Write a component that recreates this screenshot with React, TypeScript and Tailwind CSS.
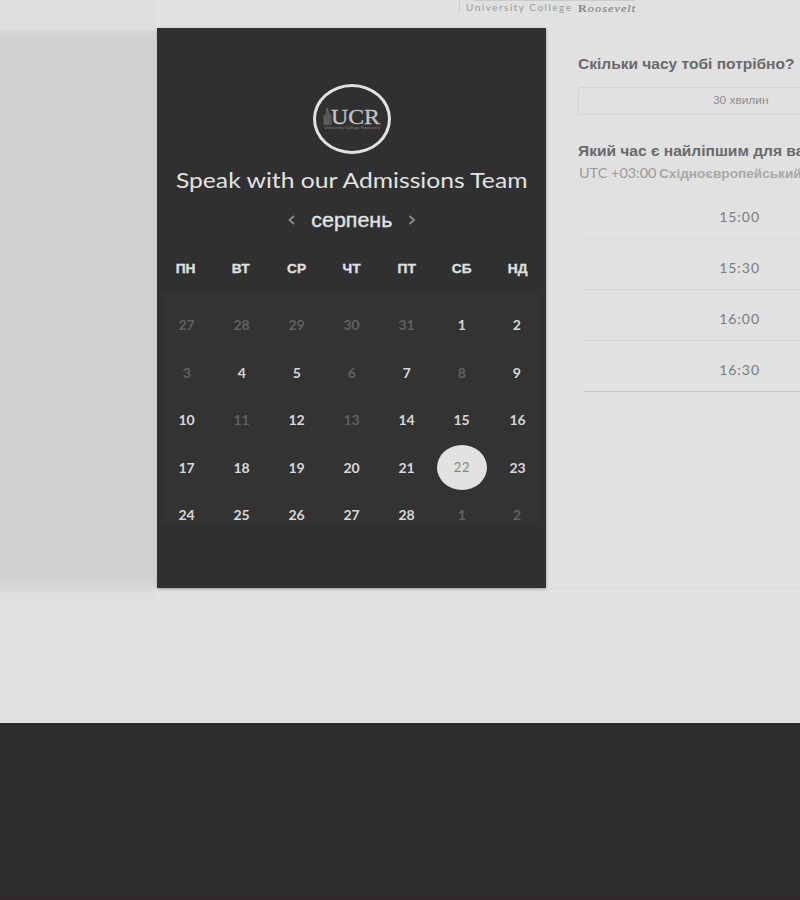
import React from "react";

const weekdays = ["ПН", "ВТ", "СР", "ЧТ", "ПТ", "СБ", "НД"];

const weeks = [
  [27, 28, 29, 30, 31, 1, 2],
  [3, 4, 5, 6, 7, 8, 9],
  [10, 11, 12, 13, 14, 15, 16],
  [17, 18, 19, 20, 21, 22, 23],
  [24, 25, 26, 27, 28, 1, 2],
];

const unavailable = new Set(["0-0", "0-1", "0-2", "0-3", "0-4", "1-0", "1-3", "1-5", "2-1", "2-3", "4-5", "4-6"]);

const times = [
  { label: "15:00", line: "border-[#dadada]" },
  { label: "15:30", line: "border-[#d5d5d5]" },
  { label: "16:00", line: "border-[#d1d1d1]" },
  { label: "16:30", line: "border-[#c6c6c6]" },
];

function Logo() {
  return (
    <div className="mx-auto flex h-[70px] w-[78px] shrink-0 items-center justify-center rounded-[50%] border-[3px] border-[#e2e2e2]">
      <svg width="58" height="30" viewBox="0 0 58 30">
        <path d="M1 21V12L3 10L4 4L6 9L8 12V21M3 13V21M5 9V21" fill="#505050" stroke="#707070" strokeWidth=".7" />
        <text x="8" y="19.5" textLength="49" lengthAdjust="spacingAndGlyphs" fontFamily="Liberation Serif, serif" fontSize="21" fill="#c4c4c4" stroke="#c4c4c4" strokeWidth=".3">UCR</text>
        <text x="1" y="24.5" textLength="56" lengthAdjust="spacingAndGlyphs" fontFamily="Lato, sans-serif" fontSize="4.2" fill="#858585">University College Roosevelt</text>
      </svg>
    </div>
  );
}

function Day({ value, id }: { value: number; id: string }) {
  if (id === "3-5") {
    return (
      <div className="flex h-[47.4px] items-center justify-center">
        <span className="-mt-[2px] flex h-[45px] w-[50px] shrink-0 items-center justify-center rounded-[50%] bg-[#e2e2e2] text-[13px] tracking-[0.8px] text-[#858585]">{value}</span>
      </div>
    );
  }
  return (
    <div className={`flex h-[47.4px] items-center justify-center font-bold ${unavailable.has(id) ? "text-[#606060]" : "text-[#d8d8d8]"}`}>
      <span className="scale-x-[1.08]">{value}</span>
    </div>
  );
}

export default function App() {
  return (
    <div className="flex h-[900px] w-[800px] flex-col overflow-hidden bg-[#e1e1e1] font-['Lato','Liberation_Sans',sans-serif]">
      <header className="flex h-7 shrink-0">
        <div className="h-7 w-[155px] bg-[#dfdfdf]" />
        <div className="ml-[304px] h-[13px] w-[178px] border-l border-[#cfcfcf] pl-[6px]">
          <div className="ml-[8px] h-px w-[161px] bg-[#cbcbcb]" />
          <div className="flex h-[14px] items-center whitespace-nowrap text-[9px] leading-[14px] text-[#999]">
            <span className="w-[112px]"><span className="inline-block origin-left scale-x-[1.11] tracking-[1.35px]">University College</span></span>
            <span className="origin-left scale-x-[1.1] font-['Liberation_Serif',serif] text-[11px] tracking-[1px] text-[#858585]"><b>R</b><i className="[-webkit-text-stroke:0.2px_#858585]">oosevelt</i></span>
          </div>
        </div>
      </header>

      <main className="flex h-[560px] shrink-0">
        <div className="h-[572px] w-[155px] shrink-0 bg-[linear-gradient(to_bottom,#dfdfdf_0px,#d5d5d5_5px,#d0d0d0_13px,#d0d0d0_548px,#d4d4d4_556px,#dfdfdf_567px)]" />
        <section className="ml-[2px] flex h-[559.5px] w-[389px] shrink-0 flex-col bg-[#303030] pt-[56px] shadow-[0_1px_3px_#999]">
          <Logo />
          <h1 className="mt-[7px] flex h-9 items-center justify-center whitespace-nowrap text-[22px] text-[#e2e2e2]">
            <span className="scale-x-[1.122]">Speak with our Admissions Team</span>
          </h1>
          <div className="mt-[2px] flex h-[42px] items-center justify-center gap-[15px] text-[#e2e2e2]">
            <svg width="8" height="10" viewBox="0 0 8 10" fill="none" stroke="#8c8c8c" strokeWidth="1.8"><path d="M6 1L1.5 5L6 9" /></svg>
            <span className="w-[82px] whitespace-nowrap text-center font-['Liberation_Sans',sans-serif] text-[20px] [-webkit-text-stroke:0.35px_#e2e2e2]"><span className="inline-block scale-x-[1.07]">серпень</span></span>
            <svg width="8" height="10" viewBox="0 0 8 10" fill="none" stroke="#8c8c8c" strokeWidth="1.8"><path d="M1.5 1L6 5L1.5 9" /></svg>
          </div>
          <div className="mt-[15px] ml-px grid h-[27px] grid-cols-[repeat(7,55.3px)] items-center text-center font-['Liberation_Sans',sans-serif] text-[12.5px] font-bold text-[#e0e0e0] [-webkit-text-stroke:0.3px_#e0e0e0]">
            {weekdays.map((d) => <span key={d} className="scale-x-[1.1]">{d}</span>)}
          </div>
          <div className="mx-[6px] mt-[10px] h-[231px] bg-[#333333] pt-[9.4px]">
            <div className="-ml-[4px] grid grid-cols-[repeat(7,55.1px)] text-[13px]">
              {weeks.flatMap((week, r) => week.map((value, c) => <Day key={`${r}-${c}`} id={`${r}-${c}`} value={value} />))}
            </div>
          </div>
        </section>

        <section className="h-[561px] w-[254px] shrink-0 overflow-hidden border-b border-[#dadada] pl-8 pt-[24px]">
          <h2 className="h-6 whitespace-nowrap font-['Liberation_Sans',sans-serif] text-[15px] font-bold leading-6 text-[#696969]"><span className="inline-block origin-left scale-x-[1.035]">Скільки часу тобі потрібно?</span></h2>
          <div className="mt-[11px] flex h-7 w-[326px] items-center justify-center rounded-[2px] border border-[#d5d5d5] pb-[2px] font-['Liberation_Sans',sans-serif] text-[11px] text-[#8e8e8e]"><span className="scale-x-[1.08]">30 хвилин</span></div>
          <h2 className="mt-[24px] h-6 whitespace-nowrap font-['Liberation_Sans',sans-serif] text-[15px] font-bold leading-6 text-[#696969]"><span className="inline-block origin-left scale-x-[1.035]">Який час є найліпшим для вас?</span></h2>
          <p className="flex h-[22px] items-center whitespace-nowrap pl-px text-[13px] text-[#999]">
            <span className="w-20 shrink-0"><span className="inline-block origin-left scale-x-[1.11]">UTC +03:00</span></span>
            <span className="origin-left scale-x-[1.09] font-['Liberation_Sans',sans-serif] text-[12.5px] font-bold text-[#a8a8a8]">Східноєвропейський час</span>
          </p>
          <div className="mt-[11px] ml-[5px] flex w-[313px] flex-col gap-[8px]">
            {times.map(({ label, line }) => (
              <div key={label} className={`flex h-[43px] items-center justify-center rounded-[2px] border-b pt-px ${line} text-[13.5px] tracking-[0.9px] text-[#7c7c7c]`}><span className="scale-x-[1.04]">{label}</span></div>
            ))}
          </div>
        </section>
      </main>
      <footer className="mt-[135px] h-[177px] shrink-0 border-b-4 border-[#30282b] bg-[#2d2d2d]" />
    </div>
  );
}
